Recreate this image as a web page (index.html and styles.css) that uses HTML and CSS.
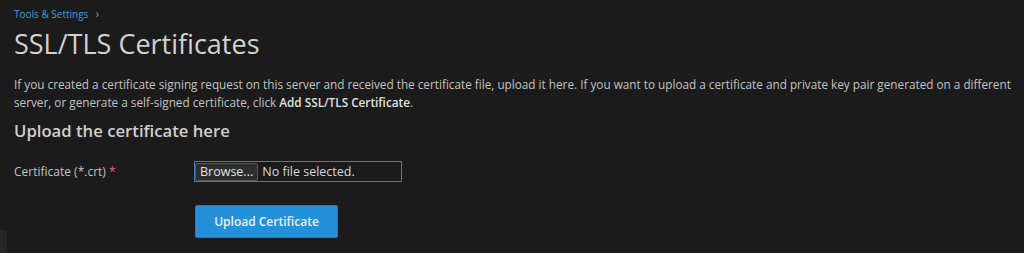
FILE: index.html
```html
<!DOCTYPE html>
<html>
<head>
<meta charset="utf-8">
<link rel="stylesheet" href="styles.css">
</head>
<body>
<div class="page">
  <nav class="crumbs"><a href="#">Tools &amp; Settings</a><span class="sep">›</span></nav>
  <h1 class="title">SSL/TLS Certificates</h1>
  <p class="intro">If you created a certificate signing request on this server and received the certificate file, upload it here. If you want to upload a certificate and private key pair generated on a different server, or generate a self-signed certificate, click <b>Add SSL/TLS Certificate</b>.</p>
  <h2 class="section">Upload the certificate here</h2>
  <div class="form-row">
    <label class="label">Certificate (*.crt) <span class="req">*</span></label>
    <div class="file-input"><span class="browse">Browse...</span><span class="fname">No file selected.</span></div>
  </div>
  <div class="actions">
    <button class="btn">Upload Certificate</button>
  </div>
</div>
<div class="side-tab"></div>
</body>
</html>
```
FILE: styles.css
```css
html, body {
  margin: 0;
  padding: 0;
  background: #1b1b1b;
  height: 253px;
  overflow: hidden;
}
body {
  font-family: "Open Sans", "Liberation Sans", sans-serif;
  color: #c4c4c4;
  position: relative;
}
.page {
  padding: 6px 4px 0 14px;
}
.crumbs {
  font-size: 10px;
  line-height: 16px;
  display: flex;
  align-items: center;
  gap: 7px;
}
.crumbs a {
  color: #3c9fd2;
  text-decoration: none;
}
.crumbs .sep {
  color: #8a8a8a;
  font-size: 12px;
}
.title {
  margin: 4px 0 0 0;
  font-size: 27px;
  font-weight: 400;
  line-height: 36px;
  color: #d2d2d2;
}
.intro {
  margin: 13px 0 0 0;
  font-size: 11.75px;
  line-height: 18px;
  color: #c2c2c2;
}
.intro b {
  font-weight: 600;
  color: #e0e0e0;
}
.section {
  margin: 8px 0 0 0;
  font-size: 16.7px;
  font-weight: 600;
  line-height: 24px;
  color: #cfcfcf;
}
.form-row {
  display: flex;
  align-items: center;
  margin-top: 18px;
}
.label {
  width: 180px;
  font-size: 12px;
  color: #c2c2c2;
}
.req {
  color: #e36a8d;
}
.file-input {
  width: 206px;
  height: 19px;
  border: 1px solid #3f7fc0;
  display: flex;
  align-items: center;
  font-size: 12.5px;
  color: #d8d8d8;
}
.browse {
  background: #2e2e2e;
  border: 1px solid #585858;
  border-radius: 2px;
  height: 16px;
  line-height: 16px;
  padding: 0 4px;
  color: #e0e0e0;
}
.fname {
  margin-left: 4px;
}
.actions {
  margin-top: 23px;
  padding-left: 181px;
}
.btn {
  width: 143px;
  height: 33px;
  background: #2590da;
  border: 1px solid #1f7cc0;
  border-radius: 2px;
  color: #e8f2fa;
  font-family: "Open Sans", "Liberation Sans", sans-serif;
  font-size: 12px;
  font-weight: 600;
}
.side-tab {
  position: absolute;
  left: 0;
  top: 230px;
  width: 7px;
  height: 30px;
  background: #262626;
  border-radius: 0 2px 0 0;
}
```
